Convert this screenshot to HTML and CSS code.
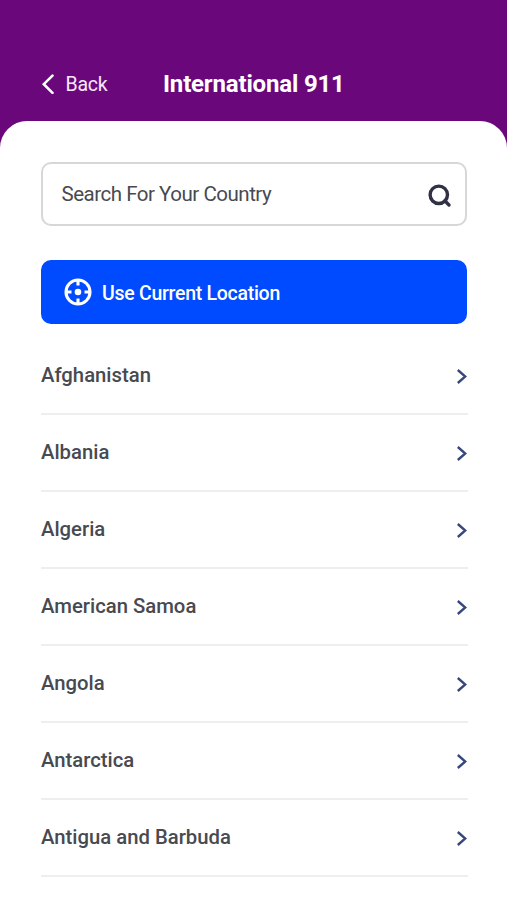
FILE: index.html
```html
<!DOCTYPE html>
<html lang="en">
<head>
<meta charset="utf-8">
<title>International 911</title>
<link rel="stylesheet" href="styles.css">
</head>
<body>
<header class="top">
  <a class="back"><svg width="13" height="20" viewBox="0 0 13 20"><path d="M11.500 1.600 2.800 10.200l8.700 8.600" stroke-linecap="round"/></svg><span>Back</span></a>
  <h1>International 911</h1>
</header>
<main class="sheet">
  <div class="search">
    <span>Search For Your Country</span>
    <svg width="24" height="24" viewBox="0 0 24 24"><circle cx="10.800" cy="10.800" r="8.700"/><path d="m16.800 16.800 4.200 4.200" stroke-linecap="round"/></svg>
  </div>
  <button class="locate">
    <svg width="28" height="28" viewBox="0 0 28 28"><circle cx="14" cy="14" r="12"/><path d="M14 2v5.500M14 20.500V26M2 14h5.500M20.500 14H26"/><circle class="dot" cx="14" cy="14" r="3.300"/></svg>
    <span>Use Current Location</span>
  </button>
  <ul class="countries">
    <li><span>Afghanistan</span><svg width="11" height="16" viewBox="0 0 11 16"><path d="m1.800 2 7.500 6.500-7.500 6.500"/></svg></li>
    <li><span>Albania</span><svg width="11" height="16" viewBox="0 0 11 16"><path d="m1.800 2 7.500 6.500-7.500 6.500"/></svg></li>
    <li><span>Algeria</span><svg width="11" height="16" viewBox="0 0 11 16"><path d="m1.800 2 7.500 6.500-7.500 6.500"/></svg></li>
    <li><span>American Samoa</span><svg width="11" height="16" viewBox="0 0 11 16"><path d="m1.800 2 7.500 6.500-7.500 6.500"/></svg></li>
    <li><span>Angola</span><svg width="11" height="16" viewBox="0 0 11 16"><path d="m1.800 2 7.500 6.500-7.500 6.500"/></svg></li>
    <li><span>Antarctica</span><svg width="11" height="16" viewBox="0 0 11 16"><path d="m1.800 2 7.500 6.500-7.500 6.500"/></svg></li>
    <li><span>Antigua and Barbuda</span><svg width="11" height="16" viewBox="0 0 11 16"><path d="m1.800 2 7.500 6.500-7.500 6.500"/></svg></li>
  </ul>
</main>
</body>
</html>
```
FILE: styles.css
```css
* { box-sizing: border-box; }
body { margin: 0; height: 900px; overflow: hidden; background: #6a087b; font-family: Roboto, sans-serif; color: #484a50; }
svg { fill: none; flex: none; }
.top { height: 121px; padding: 69px 41px 0; display: flex; align-items: flex-start; color: #fff; }
.back { width: 122px; height: 30px; display: flex; align-items: center; gap: 11.5px; font-size: 19.5px; letter-spacing: -0.2px; color: #f8e8fb; }
.back svg { stroke: #fff; stroke-width: 2.6; }
h1 { margin: 0; font-size: 24px; line-height: 30px; font-weight: 700; letter-spacing: -0.17px; white-space: nowrap; }
.sheet { height: 779px; padding: 41px 39px 0 41px; background: #fff; border-radius: 27px 27px 0 0; }
.search { width: 426px; height: 64px; padding: 0 13px 1px 18.5px; border: 2px solid #d7d7d8; border-radius: 10px; display: flex; align-items: center; justify-content: space-between; font-size: 20.5px; letter-spacing: -0.48px; }
.search svg { margin-top: 4px; stroke: #303244; stroke-width: 3.4; }
.locate { width: 426px; height: 64px; margin: 34px 0 0; padding: 0 22.5px; border: 0; border-radius: 10px; background: #004bff; color: #fff; display: flex; align-items: center; gap: 10.5px; font: 500 19.5px Roboto, sans-serif; letter-spacing: -0.28px; }
.locate span { padding-top: 2px; }
.locate svg { stroke: #fff; stroke-width: 3.1; }
.locate .dot { fill: #fff; stroke: none; }
.countries { list-style: none; margin: 14px 0 0; padding: 0; }
.countries li { height: 77px; padding: 0 1px 1px 0; border-bottom: 2px solid #eee; display: flex; align-items: center; justify-content: space-between; font-size: 20.3px; font-weight: 500; }
.countries svg { margin-top: 1px; stroke: #34487c; stroke-width: 2.4; }
```
